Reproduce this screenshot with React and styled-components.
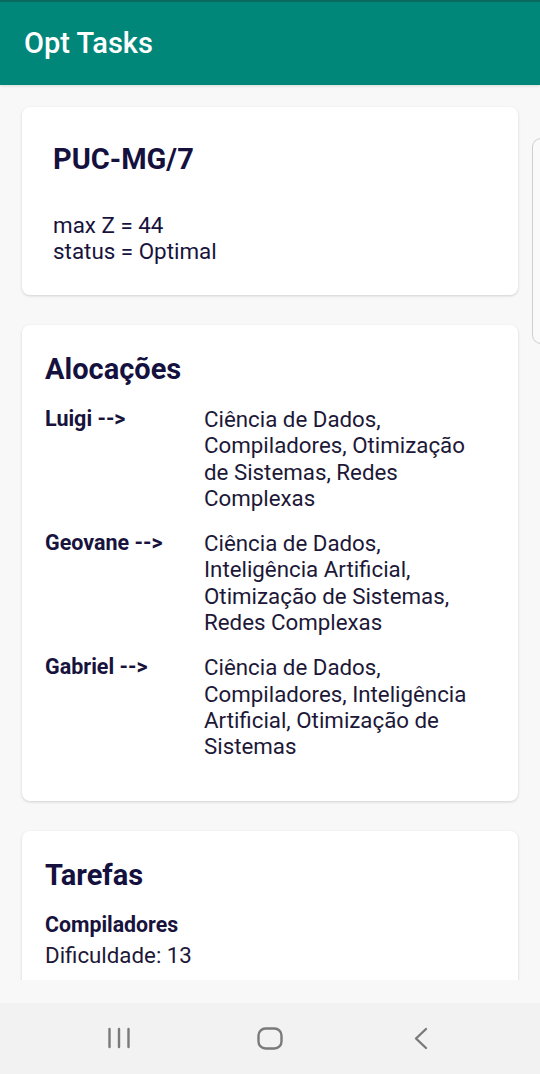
import React from 'react';
import styled, { createGlobalStyle } from 'styled-components';

const allocations = [
  { name: 'Luigi', tasks: 'Ciência de Dados, Compiladores, Otimização de Sistemas, Redes Complexas' },
  { name: 'Geovane', tasks: 'Ciência de Dados, Inteligência Artificial, Otimização de Sistemas, Redes Complexas' },
  { name: 'Gabriel', tasks: 'Ciência de Dados, Compiladores, Inteligência Artificial, Otimização de Sistemas' },
];

const App = () => (
  <Screen>
    <GlobalStyle />
    <AppBar>
      <AppTitle>Opt Tasks</AppTitle>
    </AppBar>
    <Content>
      <PeekCard />
      <Card padX="31px" padY="35px" height="188px">
        <Title>PUC-MG/7</Title>
        <Summary>
          max Z = 44
          <br />
          status = Optimal
        </Summary>
      </Card>
      <Card padX="23px" padY="27px" padBottom="41px">
        <Title>Alocações</Title>
        <AllocList>
          {allocations.map((a) => (
            <AllocRow key={a.name}>
              <Name>{`${a.name} -->`}</Name>
              <Text>{a.tasks}</Text>
            </AllocRow>
          ))}
        </AllocList>
      </Card>
      <Card padX="23px" padY="27px">
        <Title>Tarefas</Title>
        <TaskName>Compiladores</TaskName>
        <Text>Dificuldade: 13</Text>
        <Text>&nbsp;</Text>
        <Text>&nbsp;</Text>
      </Card>
    </Content>
    <NavBar>
      <svg width="24" height="22" viewBox="0 0 24 22">
        <g stroke="#7a7a7a" strokeWidth="2.4" strokeLinecap="round">
          <line x1="2.5" y1="2" x2="2.5" y2="20" />
          <line x1="12" y1="2" x2="12" y2="20" />
          <line x1="21.5" y1="2" x2="21.5" y2="20" />
        </g>
      </svg>
      <svg width="26" height="23" viewBox="0 0 26 23">
        <rect x="1.5" y="1.5" width="23" height="20" rx="7" fill="none" stroke="#7a7a7a" strokeWidth="2.4" />
      </svg>
      <svg width="16" height="23" viewBox="0 0 16 23">
        <polyline points="13,2 3,11.5 13,21" fill="none" stroke="#7a7a7a" strokeWidth="2.4" strokeLinecap="round" strokeLinejoin="round" />
      </svg>
    </NavBar>
  </Screen>
);

export default App;

const GlobalStyle = createGlobalStyle`
  body {
    margin: 0;
    background: #f8f8f8;
    font-family: Roboto, "Noto Sans", sans-serif;
  }
`;

const Screen = styled.div`
  width: 540px;
  height: 1074px;
  display: flex;
  flex-direction: column;
  overflow: hidden;
  background: #f8f8f8;
`;

const AppBar = styled.header`
  height: 85px;
  flex-shrink: 0;
  box-sizing: border-box;
  background: #00877a;
  border-top: 2px solid #0a6a5f;
  display: flex;
  align-items: center;
  padding: 0 24px 2px;
  box-shadow: 0 1px 3px rgba(0, 0, 0, .12);
`;

const AppTitle = styled.h1`
  margin: 0;
  color: #fff;
  font-size: 29px;
  font-weight: 500;
`;

const Content = styled.main`
  flex: 1;
  overflow: hidden;
  display: flex;
  flex-direction: column;
  gap: 30px;
  padding: 22px 22px 0;
  margin-bottom: 23px;
  position: relative;
`;

const PeekCard = styled.div`
  position: absolute;
  left: 532px;
  top: 53px;
  width: 40px;
  height: 206px;
  box-sizing: border-box;
  border: 1.5px solid #cfcfcf;
  border-radius: 9px;
  background: #fafafa;
`;

const Card = styled.section`
  flex-shrink: 0;
  box-sizing: border-box;
  background: #fff;
  border-radius: 8px;
  box-shadow: 0 1px 3px rgba(0, 0, 0, .16);
  padding: ${(p) => p.padY} 30px ${(p) => p.padBottom || '39px'} ${(p) => p.padX};
  height: ${(p) => p.height || 'auto'};
  color: #17133d;
`;

const Title = styled.h2`
  margin: 0;
  font-size: 29px;
  line-height: 34px;
  font-weight: 700;
  color: #15113f;
`;

const Summary = styled.p`
  margin: 36px 0 0;
  font-size: 22.4px;
  line-height: 26px;
`;

const AllocList = styled.div`
  display: flex;
  flex-direction: column;
  gap: 19px;
  margin-top: 20px;
`;

const AllocRow = styled.div`
  display: grid;
  grid-template-columns: 159px 1fr;
  align-items: start;
`;

const Name = styled.div`
  font-size: 21.5px;
  line-height: 26px;
  font-weight: 700;
`;

const Text = styled.div`
  font-size: 22.3px;
  line-height: 26.3px;
  color: #1d1838;
`;

const TaskName = styled.div`
  margin: 18px 0 2px;
  font-size: 21.3px;
  line-height: 30px;
  font-weight: 700;
`;

const NavBar = styled.nav`
  height: 71px;
  flex-shrink: 0;
  box-sizing: border-box;
  background: #f2f2f2;
  display: grid;
  grid-template-columns: repeat(3, 151px);
  justify-items: center;
  align-items: center;
  padding: 0 0 1px 43px;
`;
